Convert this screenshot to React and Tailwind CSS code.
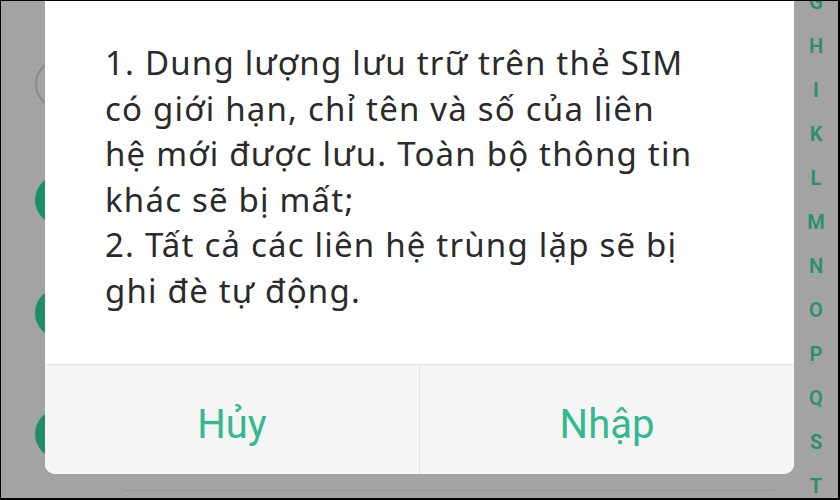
import React from "react";

const letters = ["G", "H", "I", "K", "L", "M", "N", "O", "P", "Q", "S", "T"];

export default function App() {
  const lines = [
    "1. Dung lượng lưu trữ trên thẻ SIM",
    "có giới hạn, chỉ tên và số của liên",
    "hệ mới được lưu. Toàn bộ thông tin",
    "khác sẽ bị mất;",
    "2. Tất cả các liên hệ trùng lặp sẽ bị",
    "ghi đè tự động.",
  ];
  return (
    <div
      className="relative w-[840px] h-[500px] overflow-hidden bg-black"
      style={{ fontFamily: "Roboto, 'Noto Sans', sans-serif" }}
    >
      <div className="relative mt-[1px] ml-[1px] w-[837px] h-[497px] bg-[#a3a3a3] flex overflow-hidden">
        {/* background list avatars (under the dialog) */}
        <div className="absolute left-[34px] top-[58px] w-[50px] h-[50px] rounded-full border-2 border-[#8a8a8a]" />
        <div className="absolute left-[34px] top-[174px] w-[50px] h-[50px] rounded-full bg-[#1f8d68]" />
        <div className="absolute left-[34px] top-[287px] w-[50px] h-[50px] rounded-full bg-[#1f8d68]" />
        <div className="absolute left-[34px] top-[408px] w-[50px] h-[50px] rounded-full bg-[#1f8d68]" />

        <div className="w-[44px] shrink-0" />

        <div className="w-[749px] shrink-0 flex flex-col relative z-10">
          <div className="h-[473px] bg-white rounded-b-[10px] flex flex-col overflow-hidden">
            <div className="flex-1 pt-[39px] pl-[60px] text-[33px] leading-[45.6px] tracking-[1.2px] text-[#2a2a2a] font-['Noto_Sans',sans-serif]">
              {lines.map((l) => (
                <div key={l} className="whitespace-nowrap">
                  {l}
                </div>
              ))}
            </div>
            <div className="h-[110px] bg-[#f5f5f5] border-t border-[#e4e4e4] flex">
              <div className="flex-1 flex items-center justify-center pt-[10px] text-[40px] leading-[40px] text-[#34b890]">
                Hủy
              </div>
              <div className="flex-1 flex items-center justify-center pt-[10px] border-l border-[#e2e2e2] text-[40px] leading-[40px] text-[#34b890]">
                Nhập
              </div>
            </div>
          </div>
          <div className="mt-[16px] ml-[78px] w-[652px] h-[1px] bg-[#959595]" />
        </div>

        <div className="flex-1 flex flex-col items-center -mt-[21px]">
          {letters.map((c) => (
            <div
              key={c}
              className="h-[44px] shrink-0 flex items-center justify-center text-[20px] font-semibold text-[#2b8f6b]"
            >
              {c}
            </div>
          ))}
        </div>
      </div>

      {/* annotation overlays */}
      <div className="absolute left-[510px] top-[352px] w-[218px] h-[107px] border-[3px] border-[#d2232a]" />
      <svg className="absolute left-0 top-0 pointer-events-none" width="840" height="500" viewBox="0 0 840 500">
        <polygon
          points="352,343 430,363 437,337 493,407 410,440 417,413 340,392"
          fill="#ff0000"
        />
      </svg>
    </div>
  );
}
